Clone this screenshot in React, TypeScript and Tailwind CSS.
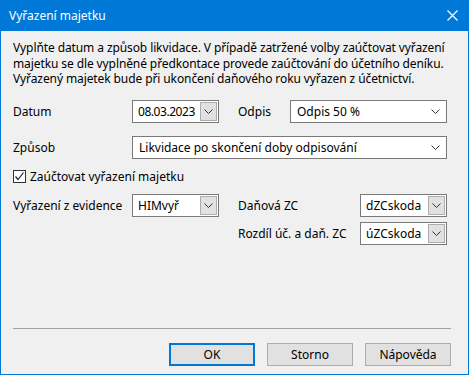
import React from "react";

const Chevron = () => (
  <svg width="9" height="5" viewBox="0 0 9 5" className="block">
    <path d="M0.5 0.5 L4.5 4.5 L8.5 0.5" fill="none" stroke="#333" strokeWidth="1" />
  </svg>
);

const Combo = ({ value, w, tight }: { value: string; w: string; tight?: boolean }) => (
  <div className={`${w} h-[23px] bg-white border border-[#7a7a7a] flex items-center pl-[5px] pr-[1px]`}>
    <span className={`flex-1 min-w-0 overflow-hidden whitespace-nowrap ${tight ? "tracking-[-0.45px]" : ""}`}>{value}</span>
    <div className="shrink-0 w-[17px] h-[19px] bg-[#e1e1e1] border border-[#adadad] flex items-center justify-center">
      <Chevron />
    </div>
  </div>
);

const FlatCombo = ({ value, w }: { value: string; w: string }) => (
  <div className={`${w} h-[23px] bg-white border border-[#7a7a7a] flex items-center pl-[6px] pr-[6px]`}>
    <span className="flex-1 whitespace-nowrap">{value}</span>
    <Chevron />
  </div>
);

const Btn = ({ label, def }: { label: string; def?: boolean }) => (
  <div
    className={`w-[86px] h-[23px] bg-[#e1e1e1] flex items-center justify-center ${
      def ? "border-2 border-[#0078d7]" : "border border-[#adadad]"
    }`}
  >
    {label}
  </div>
);

export default function App() {
  return (
    <div
      className="w-[469px] h-[375px] bg-[#0078d7] px-[1px] pb-[1px] flex flex-col text-[12px] text-black"
      style={{ fontFamily: '"Noto Sans", "Open Sans", sans-serif' }}
    >
      <div className="h-[31px] flex items-center justify-between pl-[8px] pr-[10px] text-white shrink-0">
        <span>Vyřazení majetku</span>
        <svg width="11" height="11" viewBox="0 0 11 11">
          <path d="M0.5 0.5 L10.5 10.5 M10.5 0.5 L0.5 10.5" stroke="white" strokeWidth="1.2" />
        </svg>
      </div>
      <div className="flex-1 bg-[#f0f0f0] flex flex-col pl-[12px] pr-[18px]">
        <div className="mt-[9px] h-[47px] leading-[15.5px] whitespace-nowrap tracking-[-0.1px]">
          <div>Vyplňte datum a způsob likvidace. V případě zatržené volby zaúčtovat vyřazení</div>
          <div>majetku se dle vyplněné předkontace provede zaúčtování do účetního deníku.</div>
          <div>Vyřazený majetek bude při ukončení daňového roku vyřazen z účetnictví.</div>
        </div>
        <div className="mt-[13px] flex items-center h-[23px]">
          <div className="w-[119px]">Datum</div>
          <Combo value="08.03.2023" w="w-[87px]" tight />
          <div className="ml-[19px] w-[52px]">Odpis</div>
          <FlatCombo value="Odpis 50 %" w="w-[157px]" />
        </div>
        <div className="mt-[13px] flex items-center h-[23px]">
          <div className="w-[119px]">Způsob</div>
          <FlatCombo value="Likvidace po skončení doby odpisování" w="w-[315px]" />
        </div>
        <div className="mt-[11px] flex items-center h-[13px]">
          <div className="w-[13px] h-[13px] bg-white border border-[#333] flex items-center justify-center">
            <svg width="11" height="11" viewBox="0 0 11 11">
              <path d="M1.5 5.5 L4 8.5 L9.5 1.5" fill="none" stroke="#222" strokeWidth="1.2" />
            </svg>
          </div>
          <span className="ml-[4px]">Zaúčtovat vyřazení majetku</span>
        </div>
        <div className="mt-[11px] flex items-center h-[23px]">
          <div className="w-[119px]">Vyřazení z evidence</div>
          <Combo value="HIMvyř" w="w-[87px]" />
          <div className="ml-[19px] w-[122px]">Daňová ZC</div>
          <Combo value="dZCskoda" w="w-[87px]" />
        </div>
        <div className="mt-[5px] flex items-center h-[23px]">
          <div className="w-[225px]" />
          <div className="w-[122px]">Rozdíl úč. a daň. ZC</div>
          <Combo value="úZCskoda" w="w-[87px]" />
        </div>
        <div className="mt-[83px] h-px bg-[#a0a0a0] w-[438px]" />
        <div className="mt-[14px] flex justify-end gap-[12px] w-[438px]">
          <Btn label="OK" def />
          <Btn label="Storno" />
          <Btn label="Nápověda" />
        </div>
      </div>
    </div>
  );
}
